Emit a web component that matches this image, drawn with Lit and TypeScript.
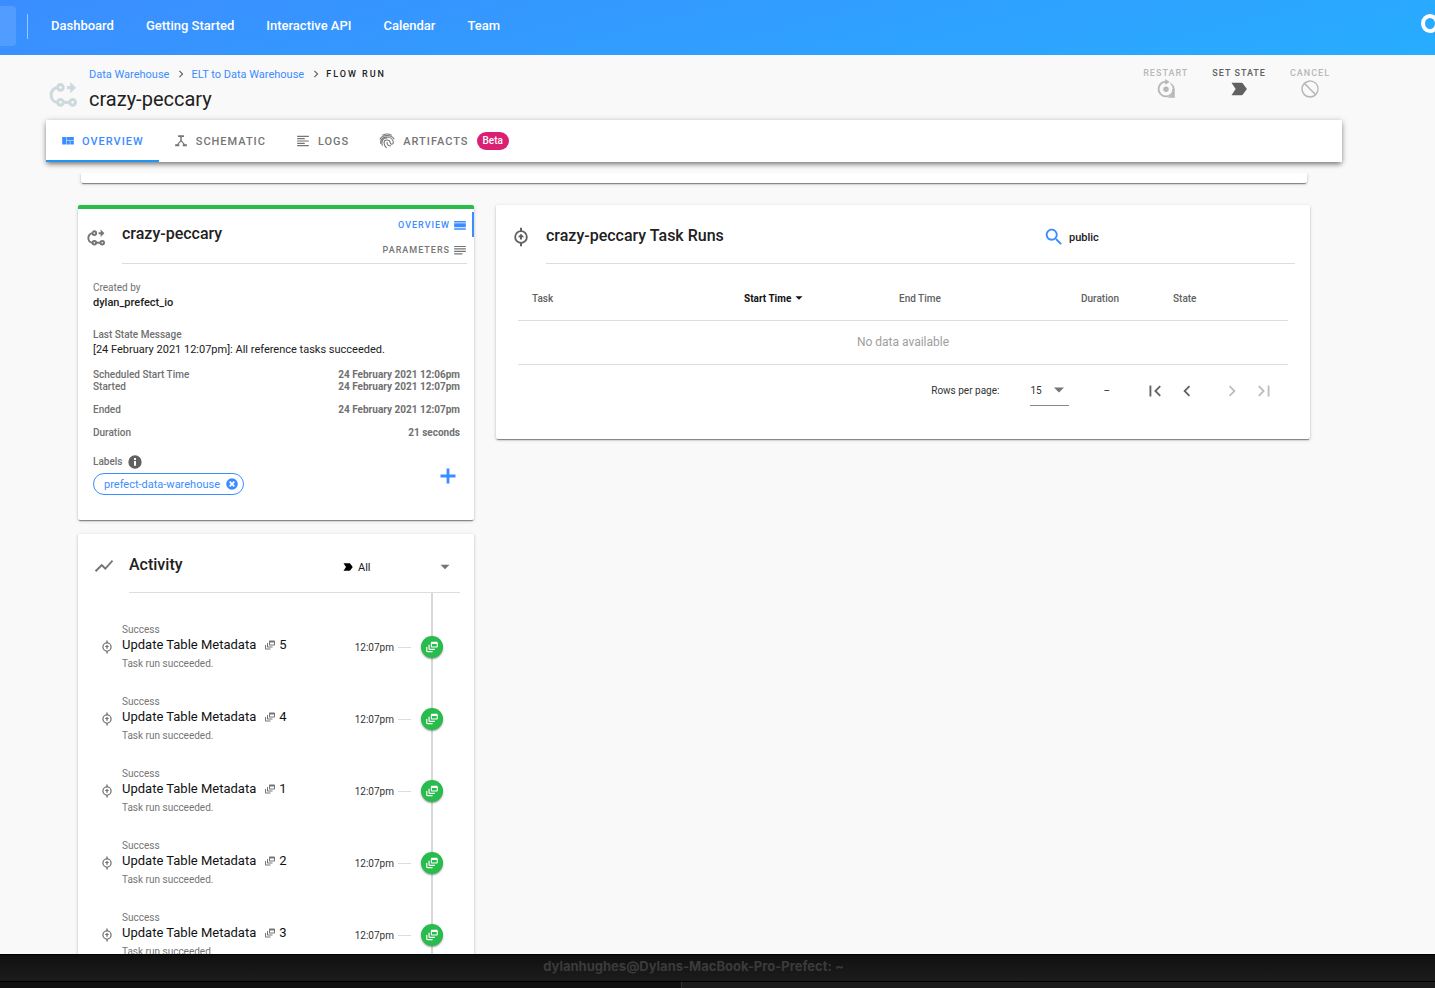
import { LitElement, html, css, svg } from "lit";
import { customElement, state } from "lit/decorators.js";

const icons: Record<string, unknown> = {
  flow: svg`<g fill="none" stroke="currentColor" stroke-width="2.600"><path d="M8 5.500C4 5.500 1.800 8.500 1.800 12c0 3.500 2.200 6.500 6.200 6.500"/><circle cx="9.800" cy="5.500" r="2.400"/><circle cx="9.800" cy="18.300" r="2.400"/><circle cx="20.300" cy="18.300" r="2.400"/><path d="M12 18.300h6"/></g><path d="M15.500 4.200h2.700V.8L23.200 5.700l-5 4.800V7H15.500z"/>`,
  quilt: svg`<path d="M9.800 18h5.400v-6H9.800v6zM2 18h7V5H2v13zm14 0h6v-6h-6v6zM9.800 5v6.200H22V5H9.800z"/>`,
  tree: svg`<path d="M7 2h10v3h-3.700v6.200l5.400 6.300h3.300v3.500h-7v-3.500h1.300L12 13l-4.300 4.500H9V21H2v-3.500h3.300l5.400-6.300V5H7z"/>`,
  lines: svg`<path d="M15 15H2v2h13v-2zm0-8H2v2h13V7zM2 13h20v-2H2v2zm0 8h20v-2H2v2zM2 3v2h20V3H2z"/>`,
  finger: svg`<g fill="none" stroke="currentColor" stroke-width="1.600" stroke-linecap="round"><path d="M5.500 3.200c4-2.200 9-2.200 13 0M1.500 9c4.500-7 16.500-7 21 0M2.500 15.500C1 3.500 20 2.500 21.500 14c.2 3.500-4.300 3.800-4.700.5-.5-5.500-9.200-5.500-9.300 0 .2 3 1.500 5.500 3.500 7.500M5 18.500C2.500 10.500 7.500 7.500 12 7.500M12 14c0 3.800 2.500 5.300 5.500 5.200"/></g>`,
  restart: svg`<path fill="none" stroke="currentColor" stroke-width="2.200" d="M13 3.200A8.900 8.900 0 1 0 20.900 12"/><path d="M11 0v7l5.500-3.500zM17 4.500A9.600 9.600 0 0 1 22.500 12v10.500H12.500c4.500-.5 7.500-3.500 7.700-8 .2-4-1-7-3.200-9.500z"/><circle cx="12" cy="12.300" r="3.300"/>`,
  label: svg`<path d="M3 19.500l12 .01c.67 0 1.270-.33 1.630-.84L21.500 12l-4.870-6.660c-.36-.51-.96-.84-1.630-.84L3 4.510 8 12z"/>`,
  block: svg`<path d="M12 1.500a10.500 10.500 0 1 0 0 21 10.500 10.500 0 0 0 0-21zm0 19A8.500 8.500 0 0 1 5.300 6.700l12 12A8.500 8.500 0 0 1 12 20.500zm6.700-3.200l-12-12A8.500 8.500 0 0 1 18.700 17.300z"/>`,
  day: svg`<path d="M2 17.500h20v2.500H2zM2 5h20v2.500H2zM2 9h20v7H2z"/>`,
  notes: svg`<path d="M2 17.500h14v2H2zM2 5h20v2H2zM2 9.200h20v2H2zM2 13.400h20v2H2z"/>`,
  info: svg`<path d="M12 2a10 10 0 1 0 0 20 10 10 0 0 0 0-20zm1.500 15.500h-3v-7h3zm0-8.500h-3V6h3z"/>`,
  close: svg`<path d="M12 2a10 10 0 1 0 0 20 10 10 0 0 0 0-20zm5 12.800L14.800 17 12 14.200 9.200 17 7 14.800 9.800 12 7 9.200 9.200 7 12 9.800 14.800 7 17 9.200 14.200 12z"/>`,
  plus: svg`<path d="M19.500 13.400h-6.100v6.100h-2.800v-6.100H4.500v-2.800h6.100V4.500h2.800v6.100h6.100z"/>`,
  chart: svg`<path d="M3.500 18.490l6-6.010 4 4L22 6.920l-1.410-1.410-7.090 7.970-4-4L2 16.990z"/>`,
  feed: svg`<path d="M8 8H6v7c0 1.100.9 2 2 2h9v-2H8V8z"/><path d="M20 3h-8c-1.100 0-2 .9-2 2v6c0 1.100.9 2 2 2h8c1.100 0 2-.9 2-2V5c0-1.100-.9-2-2-2zm0 8h-8V7h8v4z"/><path d="M4 12H2v7c0 1.100.9 2 2 2h9v-2H4v-7z"/>`,
  task: svg`<circle cx="12" cy="12" r="7" fill="none" stroke="currentColor" stroke-width="2.200"/><path d="M10.800 1h2.400v4h-2.400zM10.800 19h2.400v4h-2.400zM12 8l3.800 4.200h-2.600V15h-2.400v-2.800H8.200z"/>`,
  search: svg`<path d="M15.500 14h-.79l-.28-.27C15.410 12.590 16 11.110 16 9.500 16 5.910 13.090 3 9.500 3S3 5.910 3 9.500 5.910 16 9.500 16c1.610 0 3.090-.59 4.230-1.570l.27.28v.79l5 4.990L20.490 19l-4.990-5zm-6 0C7.010 14 5 11.990 5 9.500S7.010 5 9.500 5 14 7.010 14 9.500 11.990 14 9.500 14z"/>`,
  first: svg`<path d="M18.410 16.590L13.820 12l4.590-4.590L17 6l-6 6 6 6zM6 6h2v12H6z"/>`,
  prev: svg`<path d="M15.410 7.410L14 6l-6 6 6 6 1.410-1.410L10.830 12z"/>`,
  next: svg`<path d="M10 6L8.590 7.410 13.170 12l-4.580 4.590L10 18l6-6z"/>`,
  last: svg`<path d="M5.590 7.410L10.180 12l-4.590 4.590L7 18l6-6-6-6zM16 6h2v12h-2z"/>`,
  down: svg`<path d="M6 9l6 6 6-6z"/>`,
};

const icon = (name: string, size: string) =>
  html`<svg class="icon ${size}" viewBox="0 0 24 24" fill="currentColor" aria-hidden="true">${icons[name]}</svg>`;

const base = css`
  * { box-sizing: border-box; }
  h1, h2, p, dl, dd, ol { margin: 0; padding: 0; font-weight: 400; }
  button, input, select {
    font: inherit; color: inherit; letter-spacing: inherit;
    background: none; border: 0; padding: 0; margin: 0; appearance: none; outline: none;
  }
  button { cursor: pointer; }
  a { color: inherit; text-decoration: none; }
  .icon { display: block; flex: none; width: 24px; height: 24px; }
  .s12 { width: 12px; height: 12px; }
  .s14 { width: 14px; height: 14px; }
  .s16 { width: 16px; height: 16px; }
  .s18 { width: 18px; height: 18px; }
  .s20 { width: 20px; height: 20px; }
  .s22 { width: 22px; height: 22px; }
  .s28 { width: 28px; height: 28px; }
  .card {
    background: #fff; border-radius: 2px;
    box-shadow: 0 2px 1px -1px rgba(0, 0, 0, 0.35), 0 1px 2px rgba(0, 0, 0, 0.2), 0 1px 4px rgba(0, 0, 0, 0.12);
  }
`;

@customElement("flow-details")
class FlowDetails extends LitElement {
  static styles = [base, css`
    :host { display: block; }
    .card { border-top: 4px solid #27bc4b; height: 315px; }
    .head { display: flex; height: 54px; padding: 0 0 0 9px; }
    .head > .icon { color: #757575; margin-top: 20px; }
    .inner { flex: 1; display: flex; justify-content: space-between; margin-left: 17px; }
    .rule { height: 1px; background: #ddd; margin: 0 7px 0 44px; }
    h2 { font-size: 16px; line-height: 24px; font-weight: 500; margin-top: 13px; }
    .views { display: flex; flex-direction: column; padding-top: 3px; }
    .views button {
      flex: none; height: 25px; display: flex; align-items: center; justify-content: flex-end; gap: 3px; padding-right: 5px;
      font-size: 9px; font-weight: 500; letter-spacing: 1px; color: #757575; border-right: 2px solid transparent;
    }
    .views .on { color: #3b8dff; border-color: #3b8dff; }
    .body { padding: 18px 14px 0 15px; color: #212121; }
    .label, dl { font-size: 10px; line-height: 12px; font-weight: 500; color: #707070; }
    .light { font-weight: 400; }
    .value { font-size: 11px; line-height: 18px; }
    .strong { font-weight: 500; }
    .block { margin-bottom: 17px; }
    .tight { margin-bottom: 10px; }
    dl > div { display: flex; justify-content: space-between; margin-bottom: 11px; }
    dl > .pair { margin-bottom: 0; }
    dd { font-weight: 700; }
    .tags { display: flex; justify-content: space-between; align-items: center; margin-top: 15px; }
    .label-row { display: flex; align-items: center; gap: 5px; height: 16px; }
    .label-row .icon { color: #616161; }
    .chip {
      display: flex; align-items: center; gap: 5px; height: 22px; margin-top: 3px; padding: 0 4px 0 10px;
      border: 1px solid #3b8dff; border-radius: 11px; color: #3b8dff; font-size: 11px;
    }
    .add { color: #3b8dff; padding-top: 3px; }
  `];
  @state() view = "OVERVIEW";

  render() {
    const rows = [
      ["Scheduled Start Time", "24 February 2021 12:06pm", "pair"],
      ["Started", "24 February 2021 12:07pm", ""],
      ["Ended", "24 February 2021 12:07pm", ""],
      ["Duration", "21 seconds", ""],
    ];
    return html`<section class="card">
      <div class="head">
        ${icon("flow", "s18")}
        <div class="inner">
          <h2>crazy-peccary</h2>
          <div class="views">
            ${[["OVERVIEW", "day"], ["PARAMETERS", "notes"]].map(([name, glyph]) => html`
              <button class=${this.view === name ? "on" : ""} @click=${() => (this.view = name)}>${name}${icon(glyph, "s14")}</button>`)}
          </div>
        </div>
      </div>
      <div class="rule"></div>
      <div class="body">
        <div class="block"><p class="label light">Created by</p><p class="value strong">dylan_prefect_io</p></div>
        <div class="block tight">
          <p class="label">Last State Message</p>
          <p class="value">[24 February 2021 12:07pm]: All reference tasks succeeded.</p>
        </div>
        <dl>${rows.map(([k, v, c]) => html`<div class=${c}><dt>${k}</dt><dd>${v}</dd></div>`)}</dl>
        <div class="tags">
          <div>
            <div class="label label-row">Labels ${icon("info", "s16")}</div>
            <div class="chip">prefect-data-warehouse<button aria-label="Remove label">${icon("close", "s14")}</button></div>
          </div>
          <button class="add" aria-label="Add label">${icon("plus", "s24")}</button>
        </div>
      </div>
    </section>`;
  }
}

@customElement("activity-card")
class ActivityCard extends LitElement {
  static styles = [base, css`
    :host { display: block; }
    .head { display: flex; align-items: center; padding: 19px 20px 15px 15px; height: 58px; }
    .head > .icon { color: #757575; margin-top: 2px; }
    h2 { font-size: 16px; line-height: 24px; font-weight: 500; margin-left: 14px; flex: 1; }
    .filter { display: flex; align-items: center; width: 112px; margin-top: 4px; font-size: 11px; }
    .filter select { flex: 1; margin-left: 4px; }
    .filter > .icon { color: #000; }
    .arrow { color: #757575; }
    .rule { height: 1px; background: #ddd; margin: 0 14px 0 51px; }
    ol {
      list-style: none; padding: 18px 31px 0 22px;
      background: linear-gradient(#d8d8d8, #d8d8d8) right 41px top 0 / 2px 100% no-repeat;
    }
    li { display: flex; align-items: center; height: 72px; font-size: 10px; color: #757575; }
    .text { margin-left: 8px; flex: 1; line-height: 14px; }
    .name { display: flex; align-items: center; gap: 8px; font-size: 13px; line-height: 16px; color: #111; margin-bottom: 4px; }
    .count { display: flex; align-items: center; gap: 3px; }
    .count .icon { color: #757575; }
    .time { color: #333; }
    .dash { width: 13px; height: 1px; background: #ddd; margin: 0 10px 0 4px; }
    .dot {
      width: 22px; height: 22px; border-radius: 50%; background: #27bc4b; color: #fff;
      display: grid; place-items: center; box-shadow: 0 1px 2px rgba(0, 0, 0, 0.4);
    }
  `];

  render() {
    return html`<section class="card">
      <div class="head">
        ${icon("chart", "s22")}
        <h2>Activity</h2>
        <label class="filter">${icon("label", "s12")}
          <select aria-label="State filter"><option>All</option></select>
          <span class="arrow">${icon("down", "s18")}</span>
        </label>
      </div>
      <div class="rule"></div>
      <ol>${[5, 4, 1, 2, 3].map((n) => html`<li>
        ${icon("task", "s14")}
        <div class="text">
          <p>Success</p>
          <a class="name" href="#">Update Table Metadata <span class="count">${icon("feed", "s12")}${n}</span></a>
          <p>Task run succeeded.</p>
        </div>
        <span class="time">12:07pm</span><span class="dash"></span>
        <span class="dot">${icon("feed", "s14")}</span>
      </li>`)}</ol>
    </section>`;
  }
}

@customElement("task-runs")
class TaskRuns extends LitElement {
  static styles = [base, css`
    :host { display: block; }
    .card { height: 234px; }
    .head { display: flex; align-items: center; height: 58px; padding: 6px 16px 0 15px; }
    .head > .icon { color: #616161; }
    h2 { font-size: 16px; line-height: 24px; font-weight: 500; margin: 0 0 2px 15px; flex: 1; }
    .search { display: flex; align-items: center; gap: 4px; width: 251px; color: #3b8dff; }
    .search input { flex: 1; min-width: 0; color: #212121; font-size: 11px; font-weight: 500; }
    .rule { height: 1px; background: #ddd; margin: 0 15px 0 50px; }
    table { width: calc(100% - 44px); margin: 13px 22px 0; border-collapse: collapse; table-layout: fixed; }
    th {
      height: 43px; padding: 0 0 0 14px; text-align: left; font-size: 10px; font-weight: 500; color: #616161;
      border-bottom: 1px solid #ddd;
    }
    .sorted { color: #111; }
    .sorted button { display: flex; align-items: center; gap: 1px; font-weight: 700; }
    .c1 { width: 212px; } .c2 { width: 155px; } .c3 { width: 182px; } .c4 { width: 92px; }
    td { height: 44px; text-align: center; font-size: 12px; color: #9e9e9e; border-bottom: 1px solid #ddd; }
    .pager { display: flex; align-items: center; justify-content: flex-end; height: 52px; padding-right: 35px; font-size: 10px; color: #333; }
    .rows { display: flex; align-items: center; gap: 31px; }
    .size { display: flex; align-items: center; width: 39px; height: 30px; border-bottom: 1px solid #888; }
    .size select { width: 19px; }
    .size .icon { color: #757575; }
    .range { margin: 0 34px; }
    .nav { display: flex; color: #616161; }
    .nav button + button { margin-left: 10px; }
    .nav button:not(:disabled) + button:disabled { margin-left: 23px; }
    .nav button:disabled { color: #bdbdbd; }
  `];

  render() {
    return html`<section class="card">
      <div class="head">
        ${icon("task", "s20")}
        <h2>crazy-peccary Task Runs</h2>
        <label class="search">${icon("search", "s22")}<input aria-label="Search" .value=${"public"} /></label>
      </div>
      <div class="rule"></div>
      <table>
        <thead><tr>
          <th class="c1">Task</th>
          <th class="c2 sorted"><button>Start Time ${icon("down", "s14")}</button></th>
          <th class="c3">End Time</th><th class="c4">Duration</th><th>State</th>
        </tr></thead>
        <tbody><tr><td colspan="5">No data available</td></tr></tbody>
      </table>
      <div class="pager">
        <label class="rows">Rows per page:
          <span class="size"><select><option>15</option></select>${icon("down", "s20")}</span>
        </label>
        <span class="range">–</span>
        <div class="nav">
          <button aria-label="First page">${icon("first", "s22")}</button>
          <button aria-label="Previous page">${icon("prev", "s22")}</button>
          <button aria-label="Next page" disabled>${icon("next", "s22")}</button>
          <button aria-label="Last page" disabled>${icon("last", "s22")}</button>
        </div>
      </div>
    </section>`;
  }
}

@customElement("app-root")
class AppRoot extends LitElement {
  static styles = [base, css`
    :host {
      display: flex; flex-direction: column; height: 100vh; overflow: hidden;
      font-family: Roboto, sans-serif; color: #212121; background: #f9f9f9;
    }
    .top {
      flex: none; display: flex; align-items: center; height: 55px; padding-bottom: 3px; overflow: hidden;
      background: linear-gradient(165deg, #3b8dff, #27adff); color: #fff;
    }
    .team { width: 16px; height: 40px; border-radius: 0 4px 4px 0; background: rgba(255, 255, 255, 0.12); }
    .split { width: 1px; height: 25px; margin: 0 23px 0 11px; background: rgba(255, 255, 255, 0.5); }
    .links { display: flex; gap: 32px; flex: 1; padding-bottom: 2px; font-size: 13px; font-weight: 500; }
    .ring { width: 18px; height: 19px; margin: 0 -4px 5px 0; border: 4px solid #fff; border-radius: 50%; flex: none; }
    .sub { flex: none; display: flex; height: 65px; padding: 0 93px 0 49px; }
    .sub > .icon { color: #cfd8dc; margin-top: 26px; }
    .title { flex: 1; margin-left: 12px; padding-top: 11px; }
    .crumbs { display: flex; align-items: center; height: 16px; font-size: 11px; color: #3b8dff; }
    .crumbs .icon { color: #616161; margin: 0 3px 0 5px; }
    .crumbs .here { color: #212121; font-size: 9px; font-weight: 500; letter-spacing: 2px; }
    h1 { font-size: 20px; line-height: 24px; margin-top: 5px; }
    .actions { display: flex; gap: 24px; align-items: flex-start; padding: 13px 12px 0 0; }
    .actions button {
      display: flex; flex-direction: column; align-items: center;
      font-size: 9px; line-height: 11px; font-weight: 500; letter-spacing: 1px; color: #616161;
    }
    .actions button:disabled { color: #b8b8b8; }
    .tabs {
      flex: none; display: flex; height: 42px; margin: 0 93px 0 46px; background: #fff;
      box-shadow: 0 3px 5px -1px rgba(0, 0, 0, 0.4), 0 1px 6px rgba(0, 0, 0, 0.25);
    }
    .tabs button {
      display: flex; align-items: center; gap: 7px; padding: 0 15px;
      font-size: 11px; font-weight: 500; letter-spacing: 1px; color: #757575;
    }
    .tabs button + button { gap: 8px; }
    .tabs .on { color: #3b8dff; box-shadow: inset 0 -2px #2196f3; }
    .beta {
      padding: 0 6px; border-radius: 9px; background: #da2072; color: #fff;
      font-size: 10px; line-height: 18px; letter-spacing: 0;
    }
    main { flex: 1; min-height: 0; overflow: hidden; margin-top: 11px; padding: 0 125px 0 78px; }
    .notice { height: 10px; margin: 0 3px 22px; border-radius: 0 0 2px 2px; }
    .grid { display: grid; grid-template-columns: 396fr 814fr; gap: 22px; align-items: start; }
    .col { display: grid; gap: 14px; }
    .term { flex: none; background: #111; color: #3b3b3b; }
    .bar {
      height: 28px; background: linear-gradient(#101010, #1c1c1c); border-bottom: 1px solid #000; border-top: 1px solid #000;
      font: 700 13px/23px Inter, sans-serif; text-align: center; padding-right: 48px;
    }
    .panes { display: grid; grid-template-columns: 681fr 754fr; height: 6px; }
    .panes span + span { background: #1c1c1c; border-left: 1px solid #333; }
  `];
  @state() tab = "OVERVIEW";

  render() {
    const tabs = [["OVERVIEW", "quilt"], ["SCHEMATIC", "tree"], ["LOGS", "lines"], ["ARTIFACTS", "finger"]];
    return html`
      <header class="top">
        <span class="team"></span><span class="split"></span>
        <nav class="links">${["Dashboard", "Getting Started", "Interactive API", "Calendar", "Team"].map((t) => html`<a href="#">${t}</a>`)}</nav>
        <span class="ring"></span>
      </header>
      <div class="sub">
        ${icon("flow", "s28")}
        <div class="title">
          <nav class="crumbs">
            <a href="#">Data Warehouse</a>${icon("next", "s14")}<a href="#">ELT to Data Warehouse</a>${icon("next", "s14")}<span class="here">FLOW RUN</span>
          </nav>
          <h1>crazy-peccary</h1>
        </div>
        <div class="actions">
          <button disabled>RESTART${icon("restart", "s20")}</button>
          <button>SET STATE${icon("label", "s20")}</button>
          <button disabled>CANCEL${icon("block", "s20")}</button>
        </div>
      </div>
      <div class="tabs" role="tablist">${tabs.map(([name, glyph]) => html`
        <button role="tab" class=${this.tab === name ? "on" : ""} @click=${() => (this.tab = name)}>
          ${icon(glyph, name === "ARTIFACTS" ? "s16" : "s14")}${name}${name === "ARTIFACTS" ? html`<span class="beta">Beta</span>` : ""}
        </button>`)}
      </div>
      <main>
        <div class="card notice"></div>
        <div class="grid">
          <div class="col"><flow-details></flow-details><activity-card></activity-card></div>
          <task-runs></task-runs>
        </div>
      </main>
      <footer class="term">
        <div class="bar">dylanhughes@Dylans-MacBook-Pro-Prefect: ~</div>
        <div class="panes"><span></span><span></span></div>
      </footer>`;
  }
}
